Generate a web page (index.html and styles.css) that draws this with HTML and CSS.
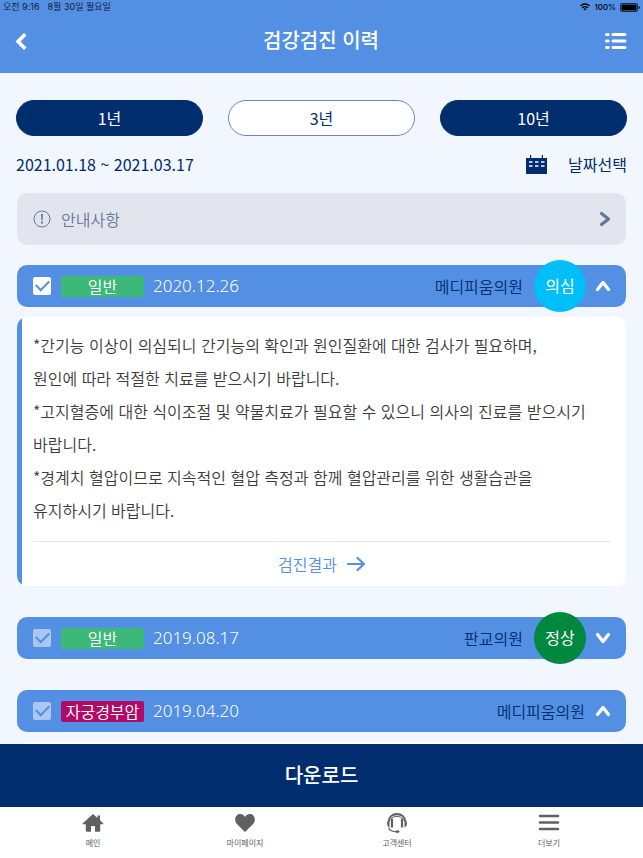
FILE: index.html
```html
<!DOCTYPE html>
<html lang="ko">
<head>
<meta charset="utf-8">
<meta name="viewport" content="width=device-width, initial-scale=1">
<title>검강검진 이력</title>
<link rel="stylesheet" href="styles.css">
</head>
<body>
<svg class="defs" width="0" height="0" aria-hidden="true">
  <symbol id="chevron" viewBox="0 0 16 16"><path d="M2.500 11.500 8 4.500l5.500 7" fill="none" stroke="currentColor" stroke-width="3.300" stroke-linecap="round" stroke-linejoin="round"/></symbol>
</svg>
<div class="app">
  <header class="header">
    <div class="status">
      <div class="status-time"><span>오전 9:16</span><span>8월 30일 월요일</span></div>
      <div class="status-power">
        <svg width="10" height="8" viewBox="0 0 10 8" fill="none" stroke="currentColor" stroke-width="1.4"><path d="M.5 2.9a6.4 6.4 0 0 1 9 0M2.2 4.9a4 4 0 0 1 5.6 0"/><path d="M3.6 6 5 7.5 6.400 6a2 2 0 0 0-2.800 0z" fill="currentColor" stroke="none"/></svg>
        <span>100%</span>
        <svg width="20" height="9" viewBox="0 0 20 9"><rect x=".5" y=".5" width="17" height="8" rx="1.500" fill="none" stroke="currentColor" stroke-opacity=".7"/><rect x="1.500" y="1.500" width="15" height="6" rx=".5" fill="currentColor"/><path d="M18.500 3v3q1.300-.5 1.300-1.500t-1.300-1.500z" fill="currentColor"/></svg>
      </div>
    </div>
    <div class="titlebar">
      <button class="icon-button" type="button" aria-label="뒤로"><svg width="12" height="18" viewBox="0 0 12 18"><path d="M9 3.500 3 9.500l6 6" fill="none" stroke="currentColor" stroke-width="3.600" stroke-linecap="square"/></svg></button>
      <h1 class="title">검강검진 이력</h1>
      <button class="icon-button icon-end" type="button" aria-label="목록"><svg width="23" height="18" viewBox="0 0 23 18" fill="none" stroke="currentColor" stroke-width="3" stroke-linecap="round"><path d="M2.500 2.500h1.700M9 2.500h12M2.500 9h1.700M9 9h12M2.500 15.500h1.700M9 15.500h12"/></svg></button>
    </div>
  </header>

  <main class="content">
    <div class="periods">
      <button class="period" type="button">1년</button>
      <button class="period period-light" type="button">3년</button>
      <button class="period" type="button">10년</button>
    </div>
    <div class="range">
      <span>2021.01.18 ~ 2021.03.17</span>
      <button class="date-button" type="button">
        <svg width="21" height="19" viewBox="0 0 21 19"><path d="M0 3h4V0h1.200v3h10.600V0H17v3h4v16H0z" fill="currentColor"/><path d="M3 7h3.500M9 7h3.500M15 7h3.500M3 11h3.500M9 11h3.500M15 11h3.500" stroke="#f2f6ff" stroke-width="1.500"/></svg>
        <span>날짜선택</span>
      </button>
    </div>
    <div class="list">
      <button class="notice" type="button">
        <svg width="18" height="18" viewBox="0 0 18 18"><circle cx="9" cy="9" r="8" fill="none" stroke="currentColor"/><path d="M8 4h2l-.4 6.500H8.400z" fill="currentColor"/><circle cx="9" cy="12.700" r="1.100" fill="currentColor"/></svg>
        <span class="notice-label">안내사항</span>
        <svg class="turn" width="16" height="16"><use href="#chevron"/></svg>
      </button>

      <section class="record">
        <div class="record-bar">
          <input class="check" type="checkbox" checked aria-label="2020.12.26 선택">
          <span class="tag">일반</span>
          <time class="record-date">2020.12.26</time>
          <span class="clinic">메디피움의원</span>
          <span class="result">의심</span>
          <button class="toggle" type="button" aria-label="접기"><svg width="16" height="16"><use href="#chevron"/></svg></button>
        </div>
        <div class="detail">
          <div class="detail-text">
            <p>*간기능 이상이 의심되니 간기능의 확인과 원인질환에 대한 검사가 필요하며,<br>원인에 따라 적절한 치료를 받으시기 바랍니다.</p>
            <p>*고지혈증에 대한 식이조절 및 약물치료가 필요할 수 있으니 의사의 진료를 받으시기 바랍니다.</p>
            <p>*경계치 혈압이므로 지속적인 혈압 측정과 함께 혈압관리를 위한 생활습관을<br>유지하시기 바랍니다.</p>
          </div>
          <a class="detail-link" href="#result">검진결과
            <svg width="18" height="16" viewBox="0 0 18 16" fill="none" stroke="currentColor" stroke-width="2.200" stroke-linecap="round" stroke-linejoin="round"><path d="M1 8h16M10.500 2 17 8l-6.500 6"/></svg>
          </a>
        </div>
      </section>

      <section class="record">
        <div class="record-bar">
          <input class="check" type="checkbox" aria-label="2019.08.17 선택">
          <span class="tag">일반</span>
          <time class="record-date">2019.08.17</time>
          <span class="clinic">판교의원</span>
          <span class="result result-normal">정상</span>
          <button class="toggle" type="button" aria-label="펼치기"><svg class="flip" width="16" height="16"><use href="#chevron"/></svg></button>
        </div>
      </section>

      <section class="record">
        <div class="record-bar">
          <input class="check" type="checkbox" aria-label="2019.04.20 선택">
          <span class="tag tag-cancer">자궁경부암</span>
          <time class="record-date">2019.04.20</time>
          <span class="clinic">메디피움의원</span>
          <button class="toggle" type="button" aria-label="접기"><svg width="16" height="16"><use href="#chevron"/></svg></button>
        </div>
        <div class="detail"></div>
      </section>
    </div>
  </main>

  <button class="download" type="button">다운로드</button>
  <nav class="tabs">
    <a class="tab" href="#main"><svg width="22" height="20" viewBox="0 0 22 20"><path d="M11 1 .8 10.200q-.6.800.5 1H3.800V18q0 .8.800.800H9V13h4v5.800h4.400q.8 0 .8-.8v-6.800h2.500q1.100-.2.500-1L18 7.200V2.500h-2.500V5z" fill="currentColor"/></svg><span>메인</span></a>
    <a class="tab" href="#mypage"><svg width="22" height="20" viewBox="0 0 22 20"><path d="M11 19 2.700 10.700C-.2 7.500 1.200 1 6 1c2.400 0 4.100 1.200 5 2.900C11.900 2.200 13.600 1 16 1c4.800 0 6.200 6.500 3.300 9.700z" fill="currentColor"/></svg><span>마이페이지</span></a>
    <a class="tab" href="#support"><svg width="22" height="20" viewBox="0 0 22 20"><path d="M3 8.500C3 3.500 6.600 1.200 11 1.200s8 2.300 8 7.300" fill="none" stroke="currentColor" stroke-width="2.200"/><path d="M5 6.500C6.500 2.500 15.500 2.500 17 6.500" fill="none" stroke="currentColor"/><path d="M3.500 6.200v8.400Q1 13.800 1 10.500t2.500-4.300zM18.500 6.200v8.400q2.500-.8 2.500-4.100t-2.500-4.300z" fill="currentColor"/><path d="M6 6v8.500M16 6v8.500" stroke="currentColor" stroke-width="2.200"/><path d="M2.600 14.500C3 17.500 6 18.700 11 18.900" fill="none" stroke="currentColor" stroke-width="1.300"/><ellipse cx="11.500" cy="18.600" rx="2" ry="1.300" fill="currentColor"/></svg><span>고객센터</span></a>
    <a class="tab" href="#more"><svg width="22" height="20" viewBox="0 0 22 20"><path d="M2 3h18M2 9.500h18M2 16h18" stroke="currentColor" stroke-width="2.600" stroke-linecap="round"/></svg><span>더보기</span></a>
  </nav>
</div>
</body>
</html>
```
FILE: styles.css
```css
* { box-sizing: border-box; }

body {
  margin: 0;
  background: #f2f6ff;
  color: #3c3c3c;
  font: 350 16px/24px "Noto Sans CJK KR", sans-serif;
  word-break: keep-all;
}

button {
  border: 0;
  padding: 0;
  background: none;
  color: inherit;
  font: inherit;
  cursor: pointer;
}

a { color: inherit; text-decoration: none; }
svg { display: block; flex: none; }
.defs { position: absolute; }

.app {
  display: flex;
  flex-direction: column;
  height: 100vh;
}

.header { flex: none; background: #538fe2; }

.status {
  display: flex;
  justify-content: space-between;
  padding: 0 3px;
  color: #10213c;
  font: 400 9px/14px Inter, "Noto Sans CJK KR", sans-serif;
}

.status-time { display: flex; gap: 8px; }

.status-power {
  display: flex;
  align-items: center;
  gap: 4px;
  color: #000;
  font-size: 8px;
  font-weight: 500;
}

.titlebar {
  display: grid;
  grid-template-columns: 1fr auto 1fr;
  align-items: center;
  height: 59px;
  padding: 0 16px 6px 15px;
  color: #fff;
}

.icon-button { justify-self: start; }
.icon-end { justify-self: end; }

.title {
  margin: 0;
  padding-bottom: 2px;
  font-size: 20px;
  font-weight: 500;
  line-height: 30px;
}

.content {
  flex: 1;
  min-height: 0;
  overflow-y: auto;
  scrollbar-width: none;
  padding: 27px 16px 0;
}

.periods {
  display: grid;
  grid-template-columns: repeat(3, 1fr);
  gap: 25px;
}

.period {
  height: 36px;
  border: 1px solid #002d6e;
  border-radius: 18px;
  background: #002d6e;
  color: #fff;
  font-weight: 400;
}

.period-light {
  border-color: #6b89b5;
  background: #fff;
  color: #002d6e;
}

.range {
  display: flex;
  align-items: center;
  justify-content: space-between;
  margin: 16px 0 17px;
  color: #002d6e;
  font-weight: 400;
}

.date-button { display: flex; align-items: center; gap: 21px; }

.list { padding: 0 1px; }

.notice {
  display: flex;
  align-items: center;
  gap: 10px;
  width: 100%;
  height: 52px;
  padding: 0 13px 0 16px;
  border-radius: 10px;
  background: #e2e5ee;
  color: #66779c;
}

.notice-label { flex: 1; text-align: left; }
.turn { transform: rotate(90deg); }
.flip { transform: rotate(180deg); }

.record { margin: 20px 0 31px; }
.record + .record { margin-top: 0; }

.record-bar {
  display: flex;
  align-items: center;
  height: 42px;
  padding: 0 15px 0 16px;
  border-radius: 10px;
  background: #538fe2;
  color: #fff;
}

.check {
  appearance: none;
  display: grid;
  place-items: center;
  flex: none;
  width: 18px;
  height: 18px;
  margin: 0 10px 0 0;
  border-radius: 2px;
  background: #fff;
  opacity: 0.5;
}

.check:checked { opacity: 1; }

.check::before {
  content: "";
  width: 11px;
  height: 6px;
  margin-bottom: 4px;
  border: solid #538fe2;
  border-width: 0 0 2px 2px;
  transform: rotate(-45deg);
}

.tag {
  width: 83px;
  border-radius: 2px;
  background: #3cb878;
  line-height: 21px;
  text-align: center;
}

.tag-cancer { background: #b00b69; }

.record-date {
  margin-left: 9px;
  font-family: "Noto Sans", sans-serif;
  font-size: 17px;
}

.clinic { margin-left: auto; color: #002d6e; }

.result {
  width: 52px;
  height: 52px;
  margin: -5px -1px -5px 11px;
  border-radius: 50%;
  background: #00bff8;
  font-weight: 400;
  line-height: 50px;
  text-align: center;
}

.result-normal { background: #00893e; }
.toggle { margin-left: 10px; }

.detail {
  min-height: 48px;
  margin-top: 10px;
  padding: 12px 16px 1px;
  border-radius: 10px;
  background: linear-gradient(to right, #538fe2 5px, #fff 5px);
}

.detail-text {
  padding-bottom: 14px;
  border-bottom: 1px solid #e6e6e6;
  line-height: 33px;
}

.detail-text p { margin: 0; }

.detail-link {
  display: flex;
  align-items: center;
  justify-content: center;
  gap: 10px;
  height: 43px;
  color: #538fe2;
}

.download {
  flex: none;
  height: 63px;
  padding-bottom: 2px;
  background: #002d6e;
  color: #fff;
  font-size: 20px;
  font-weight: 500;
}

.tabs {
  display: flex;
  flex: none;
  justify-content: space-between;
  height: 51px;
  padding: 6px 54px 0 53px;
  background: #fff;
  color: #606060;
}

.tab {
  display: flex;
  flex-direction: column;
  align-items: center;
  min-width: 80px;
  font-size: 8px;
  font-weight: 400;
  line-height: 20px;
}
```
